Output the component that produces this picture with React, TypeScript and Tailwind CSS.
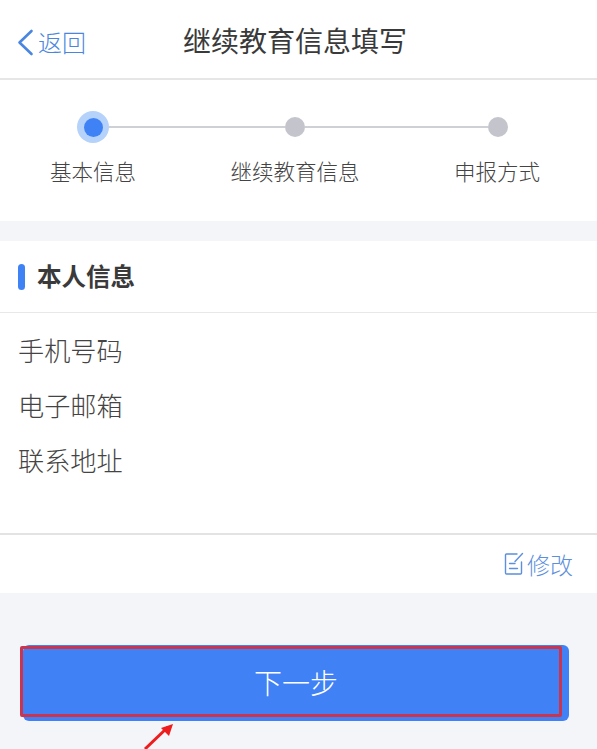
import React from 'react';

const font = { fontFamily: '"Noto Sans CJK SC", "Noto Sans", sans-serif' };

const App: React.FC = () => {
  return (
    <div className="relative h-[749px] w-[597px] overflow-hidden bg-[#f4f5f9]" style={font}>
      {/* header */}
      <div className="relative flex h-[80px] items-center justify-center border-b-2 border-[#e6e6e6] bg-white">
        <div className="absolute left-[17px] top-[26px] flex items-center text-[#4a86e0]">
          <svg width="17" height="27" viewBox="0 0 17 27" fill="none" stroke="currentColor" strokeWidth="2.6" strokeLinecap="round" strokeLinejoin="round">
            <path d="M14.5 2 L2.5 13.5 L14.5 25" />
          </svg>
          <span className="ml-[4px] text-[24px] font-light leading-[32px]">返回</span>
        </div>
        <span className="ml-[-7px] mt-[2px] text-[28px] font-normal leading-[38px] text-[#3a3a3a]">继续教育信息填写</span>
      </div>

      {/* steps */}
      <div className="h-[141px] bg-white pt-[31px]">
        <div className="flex items-center pl-[77px] pr-[89px]">
          <div className="flex h-[32px] w-[32px] shrink-0 items-center justify-center rounded-full bg-[#b5d2fb]">
            <div className="h-[19px] w-[19px] rounded-full bg-[#3f82f6]" />
          </div>
          <div className="h-[2px] w-[176px] bg-[#cfd0d5]" />
          <div className="h-[20px] w-[20px] shrink-0 rounded-full bg-[#c3c4cc]" />
          <div className="h-[2px] flex-1 bg-[#cfd0d5]" />
          <div className="h-[20px] w-[20px] shrink-0 rounded-full bg-[#c3c4cc]" />
        </div>
        <div className="mt-[13px] flex justify-between pl-[50px] pr-[57px] text-[21.5px] font-light leading-[30px] text-[#444444]">
          <span>基本信息</span>
          <span>继续教育信息</span>
          <span>申报方式</span>
        </div>
      </div>

      {/* info card */}
      <div className="mt-[20px] bg-white">
        <div className="flex h-[72px] items-center border-b border-[#e8e8e8] pl-[18px]">
          <div className="h-[26px] w-[7px] rounded-full bg-[#3f82f6]" />
          <span className="ml-[12px] mt-[-2px] text-[24.5px] font-bold leading-[32px] text-[#3a3a3a]">本人信息</span>
        </div>
        <div className="flex h-[222px] flex-col gap-[19px] border-b-2 border-[#e3e3e3] pl-[18px] pt-[19px] text-[26.2px] font-light leading-[36px] text-[#444444]">
          <span>手机号码</span>
          <span>电子邮箱</span>
          <span>联系地址</span>
        </div>
        <div className="flex h-[58px] items-center justify-end pr-[24px] text-[#5c8fdc]">
          <svg width="20" height="24" viewBox="0 0 20 24" fill="none" stroke="currentColor" strokeWidth="1.4" strokeLinecap="round" strokeLinejoin="round">
            <path d="M13 2 H2.5 a1 1 0 0 0 -1 1 V21 a1 1 0 0 0 1 1 H16.5 a1 1 0 0 0 1 -1 V10" />
            <path d="M18.5 1.5 L11 9.5" />
            <path d="M5.5 11.5 H11" />
            <path d="M5.5 16.5 H13.5" />
          </svg>
          <span className="ml-[3px] text-[23px] font-light leading-[32px]">修改</span>
        </div>
      </div>

      {/* next button */}
      <div className="ml-[23px] mt-[52px] flex h-[76px] w-[546px] items-center justify-center rounded-[6px] bg-[#4081f5] pb-[2px] text-[28px] font-light text-white">
        下一步
      </div>

      {/* annotation */}
      <div className="absolute left-[20px] top-[646px] h-[71px] w-[542px] rounded-[2px] border-[3px] border-[#c9344f]" />
      <svg className="absolute left-[140px] top-[722px]" width="36" height="27" viewBox="0 0 36 27" fill="none">
        <path d="M5 27 L28 5" stroke="#ee1c1c" strokeWidth="3" />
        <path d="M33 2 L21 6 L29 14 Z" fill="#ee1c1c" />
      </svg>
    </div>
  );
};

export default App;
